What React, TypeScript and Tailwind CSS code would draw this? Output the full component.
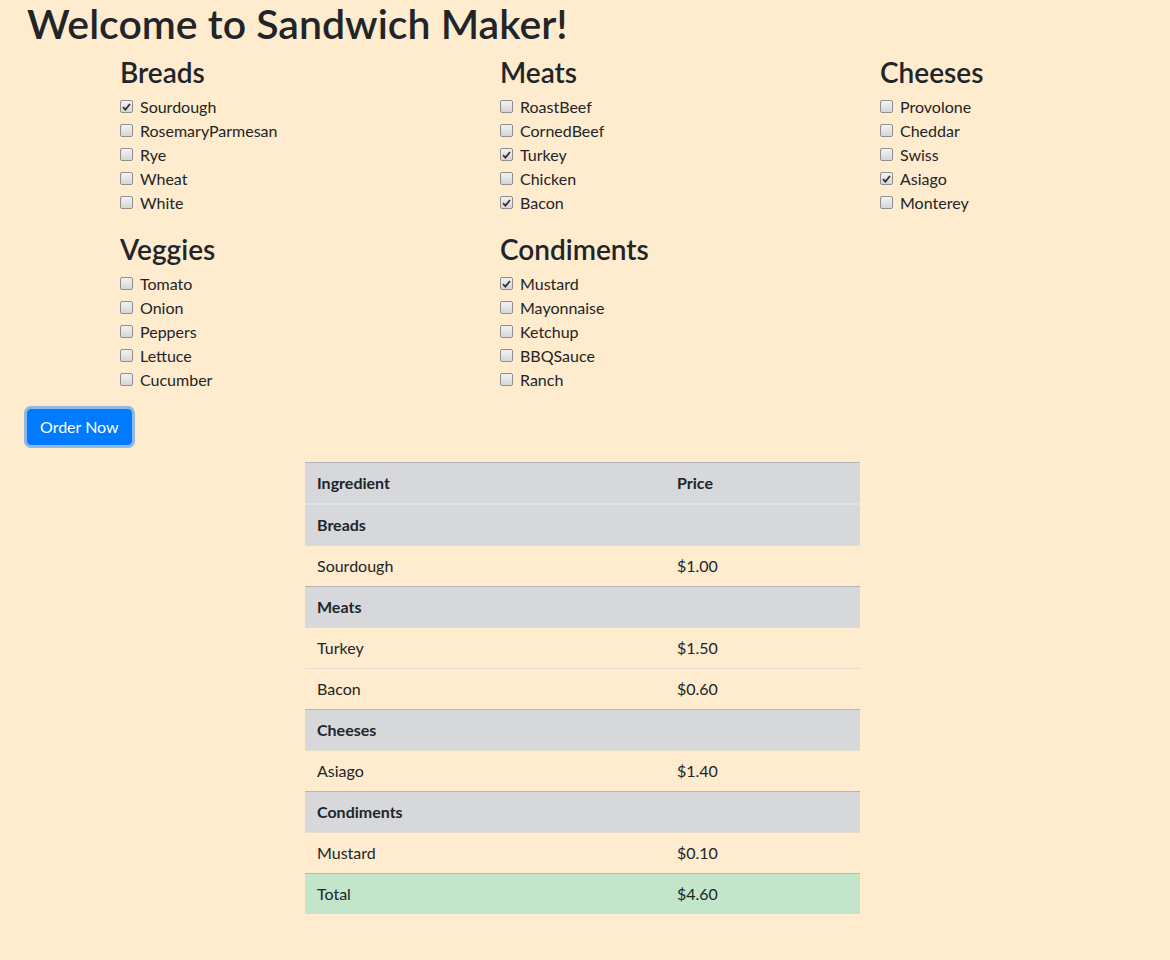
import React from "react";

type Group = { title: string; items: { name: string; checked?: boolean }[] };

const GROUPS: Group[] = [
  {
    title: "Breads",
    items: [
      { name: "Sourdough", checked: true },
      { name: "RosemaryParmesan" },
      { name: "Rye" },
      { name: "Wheat" },
      { name: "White" },
    ],
  },
  {
    title: "Meats",
    items: [
      { name: "RoastBeef" },
      { name: "CornedBeef" },
      { name: "Turkey", checked: true },
      { name: "Chicken" },
      { name: "Bacon", checked: true },
    ],
  },
  {
    title: "Cheeses",
    items: [
      { name: "Provolone" },
      { name: "Cheddar" },
      { name: "Swiss" },
      { name: "Asiago", checked: true },
      { name: "Monterey" },
    ],
  },
  {
    title: "Veggies",
    items: [
      { name: "Tomato" },
      { name: "Onion" },
      { name: "Peppers" },
      { name: "Lettuce" },
      { name: "Cucumber" },
    ],
  },
  {
    title: "Condiments",
    items: [
      { name: "Mustard", checked: true },
      { name: "Mayonnaise" },
      { name: "Ketchup" },
      { name: "BBQSauce" },
      { name: "Ranch" },
    ],
  },
];

// order summary rows: category headers are "head", picked items are "item"
const ORDER: { kind: "head" | "item"; label: string; price?: string }[] = [
  { kind: "head", label: "Breads" },
  { kind: "item", label: "Sourdough", price: "$1.00" },
  { kind: "head", label: "Meats" },
  { kind: "item", label: "Turkey", price: "$1.50" },
  { kind: "item", label: "Bacon", price: "$0.60" },
  { kind: "head", label: "Cheeses" },
  { kind: "item", label: "Asiago", price: "$1.40" },
  { kind: "head", label: "Condiments" },
  { kind: "item", label: "Mustard", price: "$0.10" },
];

function Box({ checked }: { checked?: boolean }) {
  return (
    <span className="absolute left-0 top-[5px] flex h-[13px] w-[13px] items-center justify-center rounded-[2px] border border-[#8e8f8f] bg-gradient-to-b from-[#f2f2f2] to-[#d6d6d6]">
      {checked && (
        <svg width="9" height="8" viewBox="0 0 9 8" aria-hidden>
          <path d="M1 4.2 L3.4 6.6 L8 1" fill="none" stroke="#333" strokeWidth="1.8" />
        </svg>
      )}
    </span>
  );
}

function CheckGroup({ group }: { group: Group }) {
  return (
    <div className="mb-[18px]">
      <h3 className="mb-[7px] text-[28px] font-semibold leading-[32px]">{group.title}</h3>
      {group.items.map((it) => (
        <label key={it.name} className="relative block pl-5 leading-6">
          <Box checked={it.checked} />
          {it.name}
        </label>
      ))}
    </div>
  );
}

export default function App() {
  return (
    <div
      className="min-h-[960px] bg-[#ffebcd] pb-10 text-[16px] text-[#212529]"
      style={{ fontFamily: '"Segoe UI", Lato, "Open Sans", sans-serif' }}
    >
      <div className="pl-[27px]">
        <h1 className="mb-2 text-[41px] font-semibold leading-[48px]">Welcome to Sandwich Maker!</h1>

        <div className="ml-[93px] grid grid-cols-[380px_380px_1fr]">
          {GROUPS.map((g) => (
            <CheckGroup key={g.title} group={g} />
          ))}
        </div>

        <button className="mt-[-1px] rounded-[4px] border border-[#007bff] bg-[#007bff] px-3 py-[5px] leading-6 text-white shadow-[0_0_0_3px_rgba(0,123,255,0.45)]">
          Order Now
        </button>
      </div>

      <table className="ml-[305px] mt-[17px] w-[555px] border-collapse text-left">
        <thead>
          <tr className="bg-[#d6d8db]">
            <th className="w-[360px] border-t border-b-2 border-t-[#b3b7bb] border-b-[#e0e2e4] px-3 py-2 font-bold leading-6">
              Ingredient
            </th>
            <th className="border-t border-b-2 border-t-[#b3b7bb] border-b-[#e0e2e4] px-3 py-2 font-bold leading-6">
              Price
            </th>
          </tr>
        </thead>
        <tbody>
          {ORDER.map((r, i) =>
            r.kind === "head" ? (
              <tr key={i} className="bg-[#d6d8db]">
                <td className="border-t border-[#b3b7bb] px-3 py-2 font-bold leading-6">{r.label}</td>
                <td className="border-t border-[#b3b7bb] px-3 py-2 leading-6"></td>
              </tr>
            ) : (
              <tr key={i}>
                <td className="border-t border-[#e4dccd] px-3 py-2 leading-6">{r.label}</td>
                <td className="border-t border-[#e4dccd] px-3 py-2 leading-6">{r.price}</td>
              </tr>
            )
          )}
          <tr className="bg-[#c3e6cb]">
            <td className="border-t border-[#8fd19e] px-3 py-2 leading-6">Total</td>
            <td className="border-t border-[#8fd19e] px-3 py-2 leading-6">$4.60</td>
          </tr>
        </tbody>
      </table>
    </div>
  );
}
